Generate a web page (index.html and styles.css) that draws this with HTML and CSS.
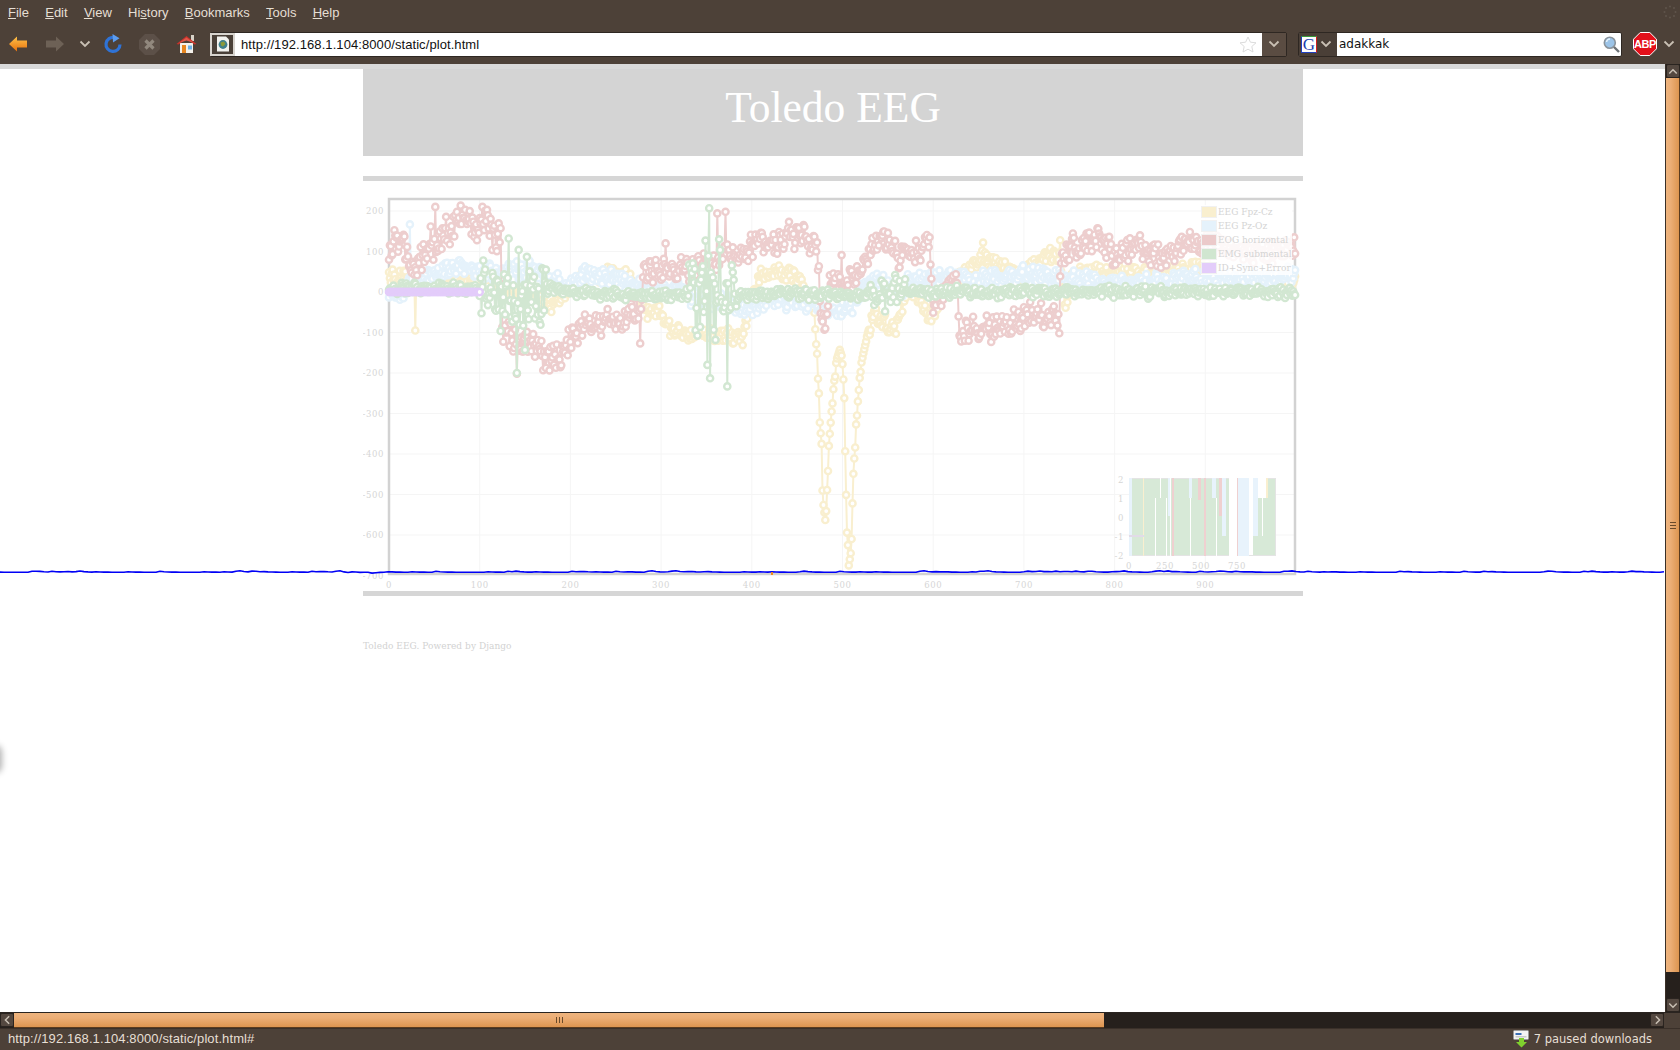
FILE: index.html
```html
<!DOCTYPE html>
<html lang="en">
<head>
  <meta charset="UTF-8" />
  <title>Toledo EEG</title>
  <link rel="stylesheet" href="styles.css">
</head>
<body>
  <div class="browser">
    <!-- menu -->
    <div class="menubar">
      <span><u>F</u>ile</span>
      <span><u>E</u>dit</span>
      <span><u>V</u>iew</span>
      <span>Hi<u>s</u>tory</span>
      <span><u>B</u>ookmarks</span>
      <span><u>T</u>ools</span>
      <span><u>H</u>elp</span>
      <svg class="spinner" width="14" height="14" viewBox="0 0 14 14">
        <circle cx="7" cy="1.5" r="1"/><circle cx="11" cy="3" r="1"/><circle cx="12.5" cy="7" r="1"/><circle cx="11" cy="11" r="1"/>
        <circle cx="7" cy="12.5" r="1"/><circle cx="3" cy="11" r="1"/><circle cx="1.5" cy="7" r="1"/><circle cx="3" cy="3" r="1"/>
      </svg>
    </div>

    <!-- toolbar -->
    <div class="toolbar">
      <div class="tb-btn w-back">
        <svg width="20" height="18" viewBox="0 0 20 18"><defs><linearGradient id="backGrad" x1="0" y1="0" x2="0" y2="1"><stop offset="0" stop-color="#ffc24a"/><stop offset="1" stop-color="#e8710c"/></linearGradient></defs><path d="M1 9 L9 1.5 V5.5 H19 V12.5 H9 V16.5 Z" fill="url(#backGrad)"/></svg>
      </div>
      <div class="tb-btn w-fwd">
        <svg width="20" height="18" viewBox="0 0 20 18"><path d="M19 9 L11 1.5 V5.5 H1 V12.5 H11 V16.5 Z" fill="#6d6156"/></svg>
      </div>
      <div class="tb-btn w-chev">
        <svg class="chev" width="12" height="8" viewBox="0 0 12 8"><path d="M1.5 1.5 L6 6 L10.5 1.5"/></svg>
      </div>
      <div class="tb-btn w-reload">
        <svg width="20" height="20" viewBox="0 0 20 20"><path d="M11.5 3.6 A7 7 0 1 0 17 10.5" fill="none" stroke="#2f73d6" stroke-width="3.2"/><path d="M9.5 0 L16.5 4.2 L10 8.6 Z" fill="#5b9cf0"/></svg>
      </div>
      <div class="tb-btn w-stop">
        <svg width="23" height="23" viewBox="0 0 23 23"><path d="M7 1 H16 L22 7 V16 L16 22 H7 L1 16 V7 Z" fill="#5c5048"/><path d="M7.5 7.5 L15.5 15.5 M15.5 7.5 L7.5 15.5" stroke="#91887e" stroke-width="3.2"/></svg>
      </div>
      <div class="tb-btn w-home">
        <svg width="21" height="20" viewBox="0 0 21 20"><rect x="15" y="1" width="3" height="6" fill="#d8d2c8"/><path d="M4 9 H17 V19 H4 Z" fill="#f4f0ea"/><path d="M0.5 10 L10.5 2 L20.5 10 L18.5 10.5 L10.5 5 L2.5 10.5 Z" fill="#c8322a"/><path d="M3 9 L10.5 3.5 L18 9 L10.5 6.5 Z" fill="#e0574a"/><rect x="6" y="11" width="4" height="8" fill="#e8861f"/><rect x="12" y="11.5" width="4" height="4" fill="#6cb0e6"/></svg>
      </div>

      <div class="urlbar">
        <div class="urlfield">
          <span class="favicon">
            <svg width="14" height="16" viewBox="0 0 14 16"><path d="M1 0.5 H10 L13 3.5 V15.5 H1 Z" fill="#f2f2ee"/><circle cx="7" cy="8.5" r="4.4" fill="#3f7f8c"/><path d="M4.5 6.5 L8 5.5 L9.5 8 L7 10.5 L5 9.5 Z" fill="#8a9a3a"/></svg>
          </span>
          <span class="urltext">http://192.168.1.104:8000/static/plot.html</span>
          <svg class="star" width="18" height="17" viewBox="0 0 18 17"><path d="M9 1 L11.4 6.2 L17 6.8 L12.8 10.5 L14 16 L9 13.2 L4 16 L5.2 10.5 L1 6.8 L6.6 6.2 Z"/></svg>
        </div>
        <div class="dropmark">
          <svg class="chev" width="12" height="8" viewBox="0 0 12 8"><path d="M1.5 1.5 L6 6 L10.5 1.5"/></svg>
        </div>
      </div>

      <div class="searchbar">
        <div class="engine">
          <span class="gbox">G</span>
          <svg class="chev" width="12" height="8" viewBox="0 0 12 8"><path d="M1.5 1.5 L6 6 L10.5 1.5"/></svg>
        </div>
        <span class="searchtext">adakkak</span>
        <svg class="glass" width="17" height="17" viewBox="0 0 17 17"><circle cx="6.8" cy="6.8" r="5.5" fill="#9cc4e8" stroke="#8b949c" stroke-width="1.6"/><path d="M3.5 6 A3.6 3.6 0 0 1 7 3" fill="none" stroke="#e4f1fb" stroke-width="1.4"/><path d="M11 11 L16 16" stroke="#6d7276" stroke-width="2.4"/></svg>
      </div>

      <svg class="abp" width="24" height="24" viewBox="0 0 24 24">
        <path d="M7.2 0.5 H16.8 L23.5 7.2 V16.8 L16.8 23.5 H7.2 L0.5 16.8 V7.2 Z" fill="#e3101a" stroke="#fff" stroke-width="1"/>
        <text x="12" y="16" class="abp-text">ABP</text>
      </svg>
      <div class="tb-btn w-last">
        <svg class="chev" width="12" height="8" viewBox="0 0 12 8"><path d="M1.5 1.5 L6 6 L10.5 1.5"/></svg>
      </div>
    </div>

    <!-- page + vertical scrollbar -->
    <div class="middle">
      <div class="page">
        <div class="content">
          <div class="header"><h1>Toledo EEG</h1></div>
          <div class="rule"></div>
          <div class="plotbox">
            <div id="plot"></div>
            <table class="legend">
              <tr><td><span class="swatch c-fpz"></span></td><td>EEG Fpz-Cz</td></tr>
              <tr><td><span class="swatch c-pz"></span></td><td>EEG Pz-Oz</td></tr>
              <tr><td><span class="swatch c-eog"></span></td><td>EOG horizontal</td></tr>
              <tr><td><span class="swatch c-emg"></span></td><td>EMG submental</td></tr>
              <tr><td><span class="swatch c-id"></span></td><td>ID+Sync+Error</td></tr>
            </table>
          </div>
          <div class="rule"></div>
          <p class="footer">Toledo EEG. Powered by Django</p>
        </div>
        <div id="trace"></div>
        <div class="blob"></div>
      </div>
      <div class="vscroll">
        <div class="sb-btn"><svg class="chev flip" width="10" height="7" viewBox="0 0 12 8"><path d="M1.5 1.5 L6 6 L10.5 1.5"/></svg></div>
        <div class="vthumb"><span></span><span></span><span></span></div>
        <div class="track"></div>
        <div class="sb-btn"><svg class="chev" width="10" height="7" viewBox="0 0 12 8"><path d="M1.5 1.5 L6 6 L10.5 1.5"/></svg></div>
      </div>
    </div>

    <!-- horizontal scrollbar -->
    <div class="hscroll">
      <div class="sb-btn"><svg class="chev" width="7" height="10" viewBox="0 0 8 12"><path d="M6 1.5 L1.5 6 L6 10.5"/></svg></div>
      <div class="hthumb"><span></span><span></span><span></span></div>
      <div class="track"></div>
      <div class="sb-btn"><svg class="chev" width="7" height="10" viewBox="0 0 8 12"><path d="M2 1.5 L6.5 6 L2 10.5"/></svg></div>
      <div class="corner"></div>
    </div>

    <!-- status -->
    <div class="statusbar">
      <span class="statustext">http://192.168.1.104:8000/static/plot.html#</span>
      <div class="downloads">
        <svg width="17" height="18" viewBox="0 0 17 18"><rect x="0.5" y="0.5" width="15" height="9" rx="1" fill="#f3f3f3" stroke="#9a9a9a"/><rect x="2.5" y="3" width="6" height="2" fill="#3a6fb5"/><rect x="2.5" y="6" width="11" height="1.5" fill="#c9c9c9"/><path d="M6 8 H11 V12 H14 L8.5 17.5 L3 12 H6 Z" fill="#7fd12e"/></svg>
        <span>7 paused downloads</span>
      </div>
    </div>
  </div>
  <script src="plot.js"></script>
</body>
</html>
```

FILE: styles.css
```css
* { box-sizing: border-box; }
html, body { margin: 0; height: 100%; overflow: hidden; }
body { background: #4d4138; font-family: "Liberation Sans", Arial, sans-serif; font-size: 13px; color: #e6dfd4; }

.browser { display: flex; flex-direction: column; height: 1050px; }

/* chrome */
.menubar { height: 24px; display: flex; align-items: center; gap: 16.25px; padding-left: 8px; position: relative; }
.spinner { position: absolute; right: 3px; top: 5px; fill: #5f544b; }

.toolbar { height: 40px; display: flex; align-items: center; padding-bottom: 0; }
.tb-btn { display: flex; align-items: center; justify-content: center; flex: none; }
.w-back { width: 36px; }
.w-fwd { width: 38px; }
.w-chev { width: 22px; }
.w-reload { width: 34px; }
.w-stop { width: 38px; }
.w-home { width: 36px; }
.w-last { width: 23px; }
.chev { fill: none; stroke: #c9c0b4; stroke-width: 1.8; }
.flip { transform: rotate(180deg); }

.urlbar { flex: 1; margin-left: 6px; height: 25px; display: flex; border: 1px solid #2e2722; border-radius: 2px; }
.urlfield { flex: 1; background: #fff; display: flex; align-items: center; }
.favicon { width: 25px; height: 23px; margin-left: -1px; background: #4a4038; border: 2px solid #d8d4ce; display: flex; align-items: center; justify-content: center; }
.urltext { color: #111; margin-left: 6px; flex: 1; letter-spacing: 0.08px; }
.star { margin-right: 5px; fill: #fff; stroke: #dcdcdc; }
.dropmark { width: 24px; background: #5a4c42; display: flex; align-items: center; justify-content: center; }

.searchbar { width: 324px; margin-left: 11px; height: 25px; background: #fff; border: 1px solid #2e2722; border-radius: 2px; display: flex; align-items: center; }
.engine { width: 38px; height: 23px; background: #4a3f37; display: flex; align-items: center; gap: 3px; padding-left: 2px; }
.gbox { width: 16px; height: 17px; background: #fff; border: 1px solid; border-color: #3a9a3a #d02020 #2040c0 #2040c0; color: #1c3fb0; font: 17px/15px "Liberation Serif", serif; text-align: center; }
.searchtext { flex: 1; color: #111; font: 12px "DejaVu Sans", sans-serif; margin-left: 2px; }
.glass { margin-right: 1px; }

.abp { margin-left: 11px; flex: none; }
.abp-text { font: bold 11px "Liberation Sans", sans-serif; letter-spacing: -0.4px; fill: #fff; text-anchor: middle; }

/* page */
.middle { flex: 1; display: flex; min-height: 0; }
.page { flex: 1; background: #fff; border-top: 5px solid #d9d9d9; padding-left: 1px; position: relative; overflow: hidden; }
.content { width: 940px; margin: 0 auto; }
.header { height: 87px; background: #d4d4d4; padding-top: 17px; }
.header h1 { margin: 0; font: normal 43.5px/43.5px "Liberation Serif", serif; color: #fff; text-align: center; }
.rule { height: 5px; background: #d6d6d6; }
.header + .rule { margin-top: 20px; }
.plotbox { height: 410px; position: relative; }
.plotbox svg { display: block; }
.footer { margin: 43px 0 0; font: 9px/14px "DejaVu Serif", serif; letter-spacing: 0.05px; color: #d2d2d2; }

/* plot */
.grid { stroke: #f5f5f5; stroke-width: 1; }
.frame { fill: none; stroke: #d2d2d2; stroke-width: 2.5; }
.tick { font: 8.5px "DejaVu Serif", serif; letter-spacing: 0.6px; fill: #d6d6d6; }
.tick-y { text-anchor: end; }
.tick-x { text-anchor: middle; }
.dots circle { fill: #fff; stroke-width: 2.4; }
.dots polyline { fill: none; stroke-width: 2; }
.s-fpz circle, .s-fpz polyline { stroke: #f9efcf; }
.s-pz circle, .s-pz polyline { stroke: #e5f2fb; }
.s-eog circle, .s-eog polyline { stroke: #edcece; }
.s-emg circle, .s-emg polyline { stroke: #d2e7d2; }
.s-id circle, .s-id polyline { stroke: #e3ccfa; }
.inset-bg { fill: #d7e9d7; stroke: #e4e4e4; stroke-width: 1; }
.bar-white { fill: #fff; }
.bar-blue { fill: #e8f3fc; }
.bar-red { fill: #efd0d0; }
.bar-yellow { fill: #f9efcf; }
.bar-id { fill: #e2dbe8; }

.legend { position: absolute; left: 838px; top: 24px; border-collapse: collapse; background: rgba(255,255,255,0.85); font: 9px/14px "DejaVu Serif", serif; color: #d4d4d4; white-space: nowrap; }
.legend td { padding: 0; height: 14px; }
.swatch { display: block; width: 16px; height: 12px; border: 1px solid #f1f1f1; margin-right: 1px; }
.c-fpz { background: #f9efcf; }
.c-pz { background: #e5f2fb; }
.c-eog { background: #ebcaca; }
.c-emg { background: #d0e6d0; }
.c-id { background: #e3ccfa; }

/* blue line lying over the page */
#trace { position: absolute; left: 0; top: 497px; width: 1665px; height: 12px; }
#trace svg { display: block; }
.trace-line { fill: none; stroke: #0000f5; stroke-width: 1.6; }
.trace-dot { fill: #f08a20; }

.blob { position: absolute; left: -10px; top: 678px; width: 10px; height: 24px; border-radius: 5px; background: #555; box-shadow: 0 0 6px 2px rgba(0,0,0,0.3); }

/* scrollbars */
.vscroll { width: 15px; display: flex; flex-direction: column; background: #26201c; border-left: 1px solid #3a2f27; }
.sb-btn { flex: none; width: 14px; height: 14px; background: #544840; border: 1px solid #2a2420; border-radius: 2px; display: flex; align-items: center; justify-content: center; }
.track { flex: 1; background: #26201c; }
.vthumb { height: 894px; flex: none; background: linear-gradient(90deg, #eeb47e, #ecae76 35%, #dd9550); display: flex; flex-direction: column; align-items: center; justify-content: center; gap: 2px; border-right: 1px solid #5b3b1f; }
.vthumb span { width: 6px; height: 1px; background: #6a4a2a; }

.hscroll { height: 16px; display: flex; background: #26201c; border-top: 1px solid #2a2420; }
.hthumb { width: 1090px; flex: none; background: linear-gradient(180deg, #eeb47e, #ecae76 35%, #dd9550); display: flex; align-items: center; justify-content: center; gap: 2px; border-bottom: 1px solid #5b3b1f; }
.hthumb span { width: 1px; height: 6px; background: #6a4a2a; }
.corner { width: 16px; background: #4d4138; flex: none; }

.statusbar { height: 22px; display: flex; align-items: center; justify-content: space-between; padding: 0 28px 2px 8px; border-top: 1px solid #3a3029; }
.statustext { letter-spacing: 0.1px; }
.downloads { display: flex; align-items: center; gap: 4px; font: 11.5px "DejaVu Sans", sans-serif; }
```

FILE: plot.js
```javascript
// small repeatable random, the plot must look the same on every load
var seed = 12345;
function rnd() {
  seed = (seed * 16807) % 2147483647;
  return seed / 2147483647;
}
function spread(a) { return (rnd() - 0.5) * 2 * a; }

function X(i) { return 389 + 0.907 * i; }
function Y(v) { return 292 - 0.405 * v; }

function interp(anchors, i) {
  for (var k = 1; k < anchors.length; k++) {
    if (i <= anchors[k][0]) {
      var a = anchors[k - 1], b = anchors[k];
      return a[1] + (b[1] - a[1]) * (i - a[0]) / (b[0] - a[0]);
    }
  }
  return anchors[anchors.length - 1][1];
}

function build(anchors, amp, spikes, last) {
  var out = [], lag = 0;
  for (var i = 0; i <= (last || 999); i++) {
    var a = amp(i);
    lag = lag * 0.4 + spread(a) * 0.5;
    out.push([i, interp(anchors, i) + lag + spread(a)]);
  }
  spikes.forEach(function (s) { out[s[0]][1] = s[1]; });
  return out;
}

var fpz = build([
  [0,45],[12,30],[60,20],[100,30],[135,5],[178,-36],[195,0],[220,45],[260,45],[272,10],[285,-55],[300,-55],[312,-100],[345,-100],
  [390,-115],[395,-60],[410,45],[430,50],[450,40],[468,-30],[472,-150],
  [473,-213],[474,-250],[475,-322],[477,-375],[478,-490],[479,-526],[481,-563],[482,-541],[483,-489],[484,-442],[485,-380],[486,-350],
  [488,-295],[489,-275],[490,-240],[491,-219],[492,-209],[493,-175],[494,-164],[497,-143],[499,-157],[500,-178],[501,-216],[502,-262],
  [503,-393],[504,-501],[505,-594],[506,-625],[507,-675],[509,-645],[510,-610],[511,-522],[512,-449],[513,-411],[514,-384],[515,-327],
  [516,-305],[517,-270],[518,-242],[519,-212],[520,-197],[521,-174],[523,-151],[526,-122],
  [534,-60],[545,-70],[558,-100],[563,-55],[574,15],[590,-45],[597,-65],[615,10],[637,50],[655,90],[673,70],[685,55],[700,40],
  [721,85],[739,90],[745,-35],[752,30],[765,50],[800,50],[850,45],[890,60],[930,30],[999,25]
], function (i) { return (i > 471 && i < 527) ? 0 : 15; }, [[29,-95],[740,128],[655,122]]);

var pz = build([
  [0,-5],[10,-10],[22,20],[35,30],[50,50],[70,60],[100,50],[130,50],[165,55],[175,30],[190,20],[200,15],[215,45],[260,30],[290,5],
  [320,10],[340,-15],[370,-30],[398,-45],[420,-25],[445,-15],[470,-25],[486,-50],[510,-40],[525,20],[545,20],[560,-10],[575,30],
  [610,35],[640,30],[670,30],[700,45],[740,35],[800,20],[830,20],[890,35],[930,35],[999,40]
], function () { return 17; }, [[23,167]]);

var eog = build([
  [0,95],[7,125],[20,105],[27,50],[38,105],[50,125],[68,150],[79,180],[95,170],[103,180],[115,135],[123,140],[125,-105],[135,-120],
  [150,-120],[167,-140],[175,-165],[189,-165],[196,-125],[215,-85],[229,-72],[251,-72],[273,-50],[278,-45],[280,50],[295,55],[321,55],
  [343,55],[365,90],[373,100],[391,90],[402,120],[428,120],[443,140],[457,140],[472,105],[474,40],[476,-70],[482,-70],[486,25],[501,25],
  [515,38],[534,110],[545,135],[552,135],[560,90],[582,100],[596,120],[598,30],[600,-30],[611,0],[627,20],[628,-85],[631,-105],[648,-95],
  [670,-90],[688,-80],[703,-55],[725,-65],[739,-55],[740,30],[741,70],[751,115],[787,120],[802,90],[824,115],[850,90],[877,115],[890,125],
  [930,105],[990,100],[999,118]
], function (i) { return i < 200 ? 32 : 24; }, [[51,210],[103,210],[141,-202],[170,-193],[189,-186],[277,-127],[305,120],[362,194],[371,198],[499,91],[739,-102],[631,-122],[741,71]]);

var emg = build([
  [0,8],[60,12],[100,5],[130,-35],[175,10],[230,-5],[280,-10],[330,-5],[355,-20],[385,-5],[500,-5],[600,0],[999,0]
], function (i) {
  if (i > 100 && i < 175) return 62;
  if (i > 330 && i < 385) return 72;
  if (i > 530 && i < 570) return 26;
  return 10;
}, [[132,132],[143,104],[152,87],[141,-200],[150,-143],[353,207],[349,127],[364,130],[365,104],[354,-213],[373,-233],[351,-180],[558,42],[547,-48]]);

var ident = [];
for (var n = 0; n <= 100; n++) ident.push([n, 0]);

function seriesSvg(data, cls) {
  var line = data.map(function (p) { return X(p[0]).toFixed(1) + ',' + Y(p[1]).toFixed(1); }).join(' ');
  var dots = data.map(function (p) {
    return '<circle cx="' + X(p[0]).toFixed(1) + '" cy="' + Y(p[1]).toFixed(1) + '" r="3.1"/>';
  }).join('');
  return '<g class="dots ' + cls + '"><polyline points="' + line + '"/>' + dots + '</g>';
}

var s = '<svg width="940" height="410" viewBox="363 181 940 410">';

// grid
for (var g = 100; g <= 900; g += 100) {
  s += '<line class="grid" x1="' + X(g) + '" x2="' + X(g) + '" y1="199" y2="574"/>';
}
for (var v = 200; v >= -600; v -= 100) {
  s += '<line class="grid" x1="389" x2="1295" y1="' + Y(v) + '" y2="' + Y(v) + '"/>';
}
s += '<rect class="frame" x="389" y="199" width="906" height="375"/>';

// tick labels
for (v = 200; v >= -700; v -= 100) {
  s += '<text class="tick tick-y" x="384" y="' + (Y(v) + 3) + '">' + v + '</text>';
}
for (g = 0; g <= 900; g += 100) {
  s += '<text class="tick tick-x" x="' + X(g) + '" y="588">' + g + '</text>';
}

s += seriesSvg(fpz, 's-fpz') + seriesSvg(pz, 's-pz') + seriesSvg(eog, 's-eog') + seriesSvg(emg, 's-emg') + seriesSvg(ident, 's-id');

// overview inset, bars are [from, to, top, bottom, colour]
s += '<rect class="inset-bg" x="1129.5" y="478.5" width="146" height="77"/>';
var bars = [
  [1129,1132,478,556,'blue'],[1143,1144,478,556,'yellow'],[1155,1156,498,556,'white'],[1160,1161,478,498,'white'],
  [1166,1167,498,556,'white'],[1168,1170,478,516,'blue'],[1170,1171,478,556,'white'],[1172,1174,478,556,'red'],
  [1190,1191,498,556,'white'],[1189,1192,478,498,'blue'],[1198,1201,478,500,'red'],[1204,1206,478,556,'red'],
  [1212,1216,478,498,'blue'],[1216,1217,498,556,'white'],[1219,1222,478,516,'red'],[1222,1226,478,536,'blue'],
  [1229,1237,478,556,'white'],[1237,1238,478,556,'red'],[1238,1249,478,556,'blue'],[1249,1253,478,555,'white'],
  [1253,1258,478,536,'blue'],[1258,1263,478,498,'white'],[1263,1266,478,498,'white'],[1266,1268,478,498,'yellow'],
  [1262,1263,498,536,'white'],[1129,1144,535,537,'id']
];
bars.forEach(function (b) {
  s += '<rect class="bar-' + b[4] + '" x="' + b[0] + '" y="' + b[2] + '" width="' + (b[1] - b[0]) + '" height="' + (b[3] - b[2]) + '"/>';
});
[['2',480],['1',499],['0',518],['-1',537],['-2',556]].forEach(function (t) {
  s += '<text class="tick tick-y" x="1124" y="' + (t[1] + 3) + '">' + t[0] + '</text>';
});
[['0',1129],['250',1165],['500',1201],['750',1237]].forEach(function (t) {
  s += '<text class="tick tick-x" x="' + t[1] + '" y="569">' + t[0] + '</text>';
});
s += '</svg>';
document.getElementById('plot').innerHTML = s;

// blue trace over the page
var pts = [], y = 6;
for (var x = 0; x <= 1665; x += 4) {
  var wob = rnd();
  var t = wob > 0.85 ? 4.4 : (wob > 0.7 ? 5.4 : 6.2);
  if (x > 340 && x < 410 && wob > 0.5) t = 4 + rnd() * 4;
  y = (y + t) / 2;
  pts.push(x + ',' + y.toFixed(1));
}
document.getElementById('trace').innerHTML =
  '<svg width="1665" height="12" viewBox="0 0 1665 12"><polyline class="trace-line" points="' + pts.join(' ') + '"/>' +
  '<rect class="trace-dot" x="771" y="6" width="2" height="3"/></svg>';
```
